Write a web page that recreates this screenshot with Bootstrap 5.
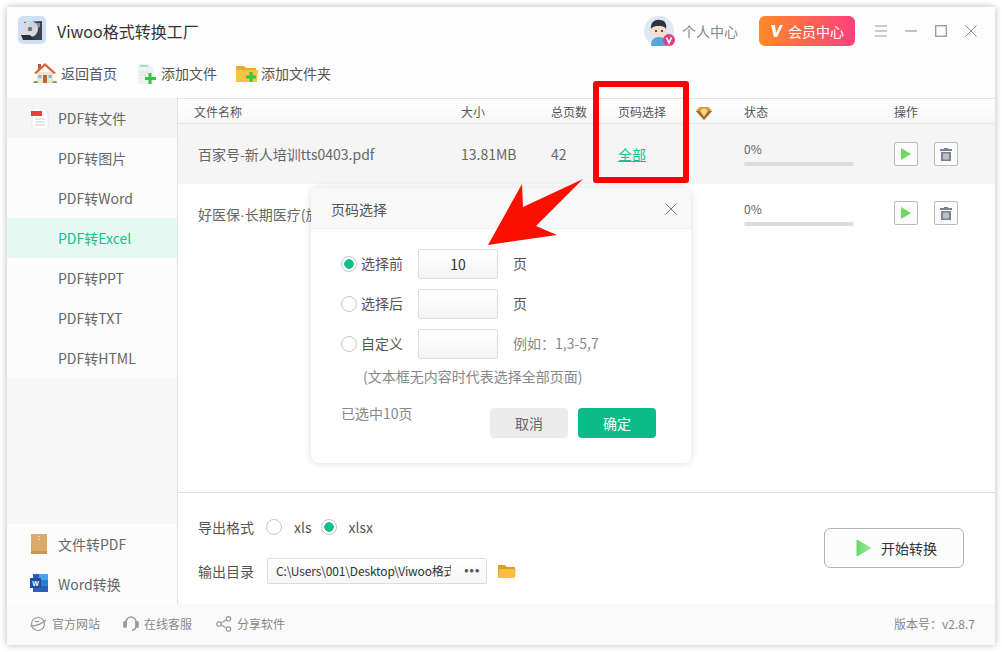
<!DOCTYPE html>
<html lang="zh">
<head>
<meta charset="utf-8">
<title>Viwoo格式转换工厂</title>
<link href="https://cdn.jsdelivr.net/npm/bootstrap@5.3.0/dist/css/bootstrap.min.css" rel="stylesheet">
<style>
html,body{height:652px;width:1002px;overflow:hidden;background:#fff}
body{font-family:"Noto Sans CJK SC","Liberation Sans",sans-serif;font-size:14px;color:#555;padding:7px}
.app-win{position:relative;width:988px;height:638px;background:#fdfdfd;box-shadow:0 0 7px rgba(0,0,0,.28)}
.title-bar{height:41px;padding:9px 9px 0 11px}
.app-name{font-size:16px;color:#333;margin-left:11px;line-height:30px}
.avatar-wrap{position:relative;width:30px;height:30px}
.user-link{margin-left:8px;color:#888;line-height:30px}
.vip-btn{width:96px;height:30px;margin-left:21px;border:0;border-radius:6px;color:#fff;padding:0;background:linear-gradient(90deg,#ff8a26,#ff3f7f);font-size:14px;line-height:30px}
.vip-btn:hover{color:#fff}
.win-ctl{width:30px;display:flex;justify-content:center;margin-left:0}
.tool-bar{height:50px;padding-left:26px}
.tool-item{display:flex;align-items:center;color:#555;line-height:24px}
.body-wrap{height:506px}
.side-nav{width:171px;background:#f7f7f7;border-right:1px solid #e2e2e2;height:506px}
.side-row{height:40px;padding-left:51px;line-height:40px;background:#fcfcfc;color:#666;position:relative}
.side-row.head-row{background:#f5f5f5}
.side-row.on-row{background:#e6f8f2;color:#16c08f}
.side-icon{position:absolute;left:24px;top:10px}
.main-pane{width:817px;background:#fff}
.list-head{height:26px;border-top:1px solid #e4e4e4;border-bottom:1px solid #e4e4e4;background:linear-gradient(#fff,#f7f7f7);font-size:12px;color:#555;line-height:25px}
.list-row{height:60px;font-size:14px;color:#666;line-height:60px}
.list-row.gray-row{background:#f5f5f5}
.c-name{width:283px;padding-left:20px;white-space:nowrap;overflow:hidden}
.list-head .c-name{padding-left:16px}
.c-size{width:90px}.c-pages{width:67px}.c-pick{width:78px}.c-gem{width:48px}.c-state{width:150px}
.all-link{color:#16c08f;text-decoration:underline}
.thin-dot{font-family:"Liberation Sans",sans-serif}
.prog-wrap{line-height:16px;font-size:12px;color:#666;margin-top:-2px}
.prog-track{height:4px;width:110px;background:#ddd;border-radius:2px;margin-top:5px}
.op-btn{width:24px;height:24px;padding:0;border:1px solid #bbb;border-radius:2px;background:#fbfbfb;display:inline-flex;align-items:center;justify-content:center}
.list-fill{height:248px}
.out-pane{height:112px;border-top:1px solid #dedede;padding:0 20px;position:relative}
.out-line{display:flex;align-items:center;color:#555}
.fmt-line{padding-top:22px;height:46px}
.dir-line{margin-top:19px;height:26px}
.form-check-input.round-radio{width:16px;height:16px;margin:0;flex:none;border:1px solid #c6c6c6;background-color:#fff}
.form-check-input.round-radio:checked{border-color:#c6c6c6;background-color:#fff;background-image:radial-gradient(circle,#0fbf8d 0 4.5px,transparent 5px)}
.path-box{width:220px;height:26px;margin-left:13px;padding:0 6px 0 8px;border:1px solid #ddd;border-radius:2px;background:linear-gradient(#fff,#f6f6f6);font-size:12px;line-height:24px;color:#333;display:flex;justify-content:space-between}
.path-txt{flex:none;width:175px;overflow:hidden;white-space:nowrap;letter-spacing:-.15px}
.path-more{flex:none;font-family:"Liberation Sans",sans-serif;font-size:8px;letter-spacing:.5px;color:#555}
.go-btn{position:absolute;left:646px;top:35px;width:140px;height:40px;border:1px solid #b4b4b4;border-radius:6px;background:#fcfcfc;color:#333;font-size:14px;padding:0 0 0 5px;display:flex;align-items:center;justify-content:center;gap:9px}
.foot-bar{height:41px;background:#fafafa;font-size:12px;color:#888;padding:0 20px 2px 22px}
.foot-item{display:flex;align-items:center;gap:5px;margin-right:23px}
.pick-dlg{position:absolute;left:304px;top:181px;width:380px;height:275px;border:0;border-radius:8px;box-shadow:0 0 8px rgba(0,0,0,.14);background:#fff;z-index:2;overflow:hidden}
.pick-head{height:41px;background:#f8f8f8;border-bottom:1px solid #eee;padding:1px 14px 0 20px;color:#555;line-height:40px}
.pick-body{padding:20px 35px 0 30px;color:#555}
.pick-line{height:30px;margin-bottom:10px;display:flex;align-items:center}
.pick-lab{width:61px;padding:0 0 2px 4px;line-height:28px}
.form-control.page-in{width:80px;height:30px;padding:0;border:1px solid #ddd;border-radius:2px;background:linear-gradient(#fff,#f4f4f4);text-align:center;font-size:14px;color:#333;flex:none;font-family:inherit}
.pick-unit{margin-left:15px;padding-bottom:2px}
.pick-note{padding-left:22px;margin-top:-3px;color:#888;line-height:20px}
.pick-sel{color:#888;line-height:20px;margin-top:-5px}
.pick-foot{margin-top:22px}
.d-btn{width:78px;height:30px;border:0;border-radius:4px;font-size:14px;padding:0;line-height:30px}
.d-btn.no-btn{background:#ececec;color:#666;margin-right:10px}
.d-btn.yes-btn{background:#0abb87;color:#fff}
.red-frame{position:absolute;left:586px;top:74px;width:96px;height:102px;border:6px solid #f00;border-radius:3px;z-index:3}
.red-arrow{position:absolute;left:0;top:0;z-index:4;pointer-events:none}
</style>
</head>
<body>
<div class="app-win">
  <div class="title-bar d-flex align-items-start">
    <svg width="28" height="28" viewBox="0 0 28 28"><rect width="28" height="28" rx="5" fill="#cfe0f5"/><path d="M6 6l18-1v19l-10 0z" fill="#3c4250"/><path d="M17 7l5 0v4l-3 1z" fill="#8a90a0"/><circle cx="12" cy="13" r="8" fill="#d9d9e2"/><path d="M12 5a8 8 0 0 1 7 5l-7 3z" fill="#c2d6ea"/><circle cx="12" cy="13" r="2.200" fill="#6d7280"/><path d="M3 19h9l5 5H5z" fill="#2c2f36"/></svg>
    <div class="app-name">Viwoo格式转换工厂</div>
    <div class="ms-auto d-flex align-items-start">
      <div class="avatar-wrap">
        <svg width="32" height="30" viewBox="0 0 32 30"><circle cx="15" cy="15" r="15" fill="#dfe7ef"/><path d="M7 30c0-6 3-9 8-9s8 3 8 9z" fill="#58a6dc"/><circle cx="15" cy="14" r="7" fill="#fbdcc8"/><path d="M7 13c-1-7 5-10 9-9 5 0 7 4 6 9-2-3-4-3-7-3-3 0-6 0-8 3z" fill="#2d3340"/><circle cx="12" cy="15" r="1" fill="#222"/><circle cx="18" cy="15" r="1" fill="#222"/><circle cx="25" cy="24" r="6" fill="#d9407f"/><path d="M22.500 21.500l2.500 5.500 2.500-5.500" stroke="#fff" stroke-width="1.600" fill="none"/></svg>
      </div>
      <span class="user-link">个人中心</span>
      <button class="btn vip-btn d-flex align-items-center justify-content-center gap-1" type="button"><svg width="14" height="14" viewBox="0 0 14 14"><path d="M1 1h4l1 8 4-8h3L7 13H4z" fill="#fff"/></svg>会员中心</button>
      <div class="d-flex align-items-center" style="height:30px;margin-left:11px">
        <div class="win-ctl"><svg width="12" height="12" viewBox="0 0 12 12"><path d="M0 1h12M0 6h12M0 11h12" stroke="#999" stroke-width="1.200"/></svg></div>
        <div class="win-ctl"><svg width="12" height="12" viewBox="0 0 12 12"><path d="M0 6h12" stroke="#999" stroke-width="1.200"/></svg></div>
        <div class="win-ctl"><svg width="12" height="12" viewBox="0 0 12 12"><rect x=".7" y=".7" width="10.600" height="10.600" fill="none" stroke="#999" stroke-width="1.300"/></svg></div>
        <div class="win-ctl"><svg width="12" height="12" viewBox="0 0 12 12"><path d="M.5.500l11 11M11.500.500l-11 11" stroke="#888" stroke-width="1"/></svg></div>
      </div>
    </div>
  </div>
  <div class="tool-bar d-flex align-items-center">
    <div class="tool-item" style="width:104px"><svg width="24" height="24" viewBox="0 0 24 24" class="me-1"><path d="M4 11h16v11H4z" fill="#f3e3c8"/><path d="M1 12L12 2l11 10-2 1-9-8-9 8z" fill="#d8603c"/><path d="M5 3h3v3l-3 3z" fill="#c4563a"/><rect x="10" y="14" width="4" height="8" fill="#b5672e"/><rect x="5.500" y="14" width="3" height="3" fill="#7fb6d8"/><rect x="15.500" y="14" width="3" height="3" fill="#7fb6d8"/><path d="M0 22c1-3 5-3 5 0zM19 22c1-3 5-3 5 0z" fill="#6fa85a"/></svg>返回首页</div>
    <div class="tool-item" style="width:99px"><svg width="20" height="24" viewBox="0 0 20 24" style="margin-right:4px"><path d="M1 3h11l5 5v15H1z" fill="#f0f1f2"/><path d="M3 5h8" stroke="#49d6b4" stroke-width="1"/><path d="M3 11h9M3 14h6" stroke="#ddd"/><path d="M13 12v11M8 17.500h11" stroke="#35c53f" stroke-width="3" fill="none"/></svg>添加文件</div>
    <div class="tool-item"><svg width="22" height="24" viewBox="0 0 22 24" style="margin-right:3px"><path d="M0 5h8l2 2h10v14H0z" fill="#e9a92b"/><path d="M0 9h22l-1 12H0z" fill="#f6c444"/><path d="M15 11v10M10 16h10" stroke="#35c53f" stroke-width="3"/></svg>添加文件夹</div>
  </div>
  <div class="body-wrap d-flex">
    <div class="side-nav d-flex flex-column">
      <div class="side-row head-row"><svg class="side-icon" width="18" height="21" viewBox="0 0 18 21"><path d="M1 0h12l4 4v17H1z" fill="#fff" stroke="#e8e8e8"/><rect y="3" width="11" height="5" fill="#e8413c"/><path d="M4 11h10M4 14h10M4 17h10" stroke="#ccc"/></svg>PDF转文件</div>
      <div class="side-row">PDF转图片</div>
      <div class="side-row">PDF转Word</div>
      <div class="side-row on-row">PDF转Excel</div>
      <div class="side-row">PDF转PPT</div>
      <div class="side-row">PDF转TXT</div>
      <div class="side-row">PDF转HTML</div>
      <div class="side-row mt-auto"><svg class="side-icon" width="16" height="21" viewBox="0 0 16 21"><rect y="0" width="16" height="20" fill="#dcab6b"/><rect y="17" width="16" height="3" fill="#c99752"/><path d="M8 2v1M8 5v1" stroke="#fff"/></svg>文件转PDF</div>
      <div class="side-row"><svg class="side-icon" style="left:23px" width="18" height="18" viewBox="0 0 18 18"><rect x="3" y="0" width="15" height="18" fill="#2b5cb8"/><rect x="9" y="0" width="9" height="6" fill="#41a5ee"/><rect x="9" y="6" width="9" height="6" fill="#2b7cd3"/><rect y="4" width="11" height="10" fill="#1b4fa8"/><text x="5.500" y="12" font-size="7" fill="#fff" text-anchor="middle" font-weight="700" font-family="Liberation Sans">W</text></svg>Word转换</div>
    </div>
    <div class="main-pane d-flex flex-column">
      <div class="list-head d-flex">
        <div class="c-name">文件名称</div><div class="c-size">大小</div><div class="c-pages">总页数</div><div class="c-pick">页码选择</div>
        <div class="c-gem d-flex align-items-center" style="padding-top:4px"><svg width="16" height="14" viewBox="0 0 16 14"><path d="M3.500 1h9L16 5l-8 9-8-9z" fill="#d89b48"/><path d="M0 5h16L8 14z" fill="#a9672b"/><path d="M4 5l4-3 4 3-4 6z" fill="#f6d486"/></svg></div>
        <div class="c-state">状态</div><div>操作</div>
      </div>
      <div class="list-row gray-row d-flex">
        <div class="c-name">百家号-新人培训tts0403.pdf</div><div class="c-size">13.81MB</div><div class="c-pages">42</div><div class="c-pick"><span class="all-link">全部</span></div><div class="c-gem"></div>
        <div class="c-state d-flex align-items-center"><div class="prog-wrap">0%<div class="prog-track"></div></div></div>
        <div class="d-flex align-items-center gap-3" style="margin-top:-1px">
          <button class="op-btn" type="button"><svg width="12" height="14" viewBox="0 0 12 14"><path d="M1 1l10 6-10 6z" fill="#70d765"/></svg></button>
          <button class="op-btn" type="button"><svg width="14" height="14" viewBox="0 0 14 14"><path d="M5 1h4v1h4v2H1V2h4zM2 5h10v9H2z" fill="#7a8190"/><path d="M5 6.500v6M7 6.500v6M9 6.500v6" stroke="#fff"/></svg></button>
        </div>
      </div>
      <div class="list-row d-flex">
        <div class="c-name">好医保<span class="thin-dot">·</span>长期医疗(旅</div><div class="c-size"></div><div class="c-pages"></div><div class="c-pick"></div><div class="c-gem"></div>
        <div class="c-state d-flex align-items-center"><div class="prog-wrap">0%<div class="prog-track"></div></div></div>
        <div class="d-flex align-items-center gap-3" style="margin-top:-2px">
          <button class="op-btn" type="button"><svg width="12" height="14" viewBox="0 0 12 14"><path d="M1 1l10 6-10 6z" fill="#70d765"/></svg></button>
          <button class="op-btn" type="button"><svg width="14" height="14" viewBox="0 0 14 14"><path d="M5 1h4v1h4v2H1V2h4zM2 5h10v9H2z" fill="#7a8190"/><path d="M5 6.500v6M7 6.500v6M9 6.500v6" stroke="#fff"/></svg></button>
        </div>
      </div>
      <div class="list-fill"></div>
      <div class="out-pane">
        <div class="out-line fmt-line">导出格式
          <input class="form-check-input round-radio" style="margin-left:12px" type="radio" name="fmt"><span style="margin-left:12px;margin-right:9px">xls</span>
          <input class="form-check-input round-radio" type="radio" name="fmt" checked><span style="margin-left:12px">xlsx</span></div>
        <div class="out-line dir-line">输出目录
          <div class="path-box"><span class="path-txt">C:\Users\001\Desktop\Viwoo格式</span><span class="path-more">●●●</span></div>
          <svg style="margin-left:11px" width="18" height="16" viewBox="0 0 18 16"><path d="M0 2h7l2 2h8v10H0z" fill="#dd9c24"/><path d="M1 6h17l-2 9H0z" fill="#f6c03e"/></svg>
        </div>
        <button class="go-btn btn" type="button"><svg width="16" height="18" viewBox="0 0 16 18"><defs><linearGradient id="gr" x1="0" x2="1"><stop offset="0" stop-color="#62d866"/><stop offset="1" stop-color="#a4eaa0"/></linearGradient></defs><path d="M1 1l14 8-14 8z" fill="url(#gr)" stroke="url(#gr)" stroke-linejoin="round"/></svg>开始转换</button>
      </div>
    </div>
  </div>
  <div class="foot-bar d-flex align-items-center">
    <div class="foot-item"><svg width="18" height="16" viewBox="0 0 18 16" fill="none" stroke="#999" stroke-width="1.200"><circle cx="9" cy="8" r="6.500"/><path d="M1 10c5 0 12-2 16-6M6 5c1 1 3 1 4 0"/></svg>官方网站</div>
    <div class="foot-item"><svg width="16" height="16" viewBox="0 0 16 16" fill="none" stroke="#999" stroke-width="1.500"><path d="M3 10V6a5 5 0 0 1 10 0v4M13 10c0 3-2 4-4 4"/><rect x="1" y="6" width="2" height="5" fill="#999"/><rect x="13" y="6" width="2" height="5" fill="#999"/></svg>在线客服</div>
    <div class="foot-item" style="margin-left:1px"><svg width="16" height="16" viewBox="0 0 16 16" fill="none" stroke="#999" stroke-width="1.200"><circle cx="3" cy="8" r="2.200"/><circle cx="12.500" cy="2.800" r="2.200"/><circle cx="12.500" cy="13" r="2.200"/><path d="M5 7l5.500-3.200M5 9l5.500 3"/></svg>分享软件</div>
    <div class="ms-auto">版本号：v2.8.7</div>
  </div>

  <div class="pick-dlg card">
    <div class="pick-head d-flex justify-content-between align-items-center"><span>页码选择</span><svg width="12" height="12" viewBox="0 0 12 12"><path d="M.5.500l11 11M11.500.500l-11 11" stroke="#777" stroke-width="1"/></svg></div>
    <div class="pick-body">
      <div class="pick-line"><input class="form-check-input round-radio" type="radio" name="pg" checked><span class="pick-lab">选择前</span><input class="form-control page-in" value="10"><span class="pick-unit">页</span></div>
      <div class="pick-line"><input class="form-check-input round-radio" type="radio" name="pg"><span class="pick-lab">选择后</span><input class="form-control page-in"><span class="pick-unit">页</span></div>
      <div class="pick-line"><input class="form-check-input round-radio" type="radio" name="pg"><span class="pick-lab">自定义</span><input class="form-control page-in"><span class="pick-unit" style="color:#888">例如：1,3-5,7</span></div>
      <div class="pick-note">(文本框无内容时代表选择全部页面)</div>
      <div class="pick-foot d-flex align-items-start">
        <span class="pick-sel">已选中10页</span>
        <button class="btn d-btn no-btn ms-auto" type="button">取消</button>
        <button class="btn d-btn yes-btn" type="button">确定</button>
      </div>
    </div>
  </div>
  <div class="red-frame"></div>
  <svg class="red-arrow" width="988" height="638" viewBox="7 7 988 638"><polygon points="488,245 522,184 523,207 583,179 536,226 557,235" fill="#f91000"/></svg>
</div>
<script src="https://cdn.jsdelivr.net/npm/bootstrap@5.3.0/dist/js/bootstrap.bundle.min.js"></script>
</body>
</html>
